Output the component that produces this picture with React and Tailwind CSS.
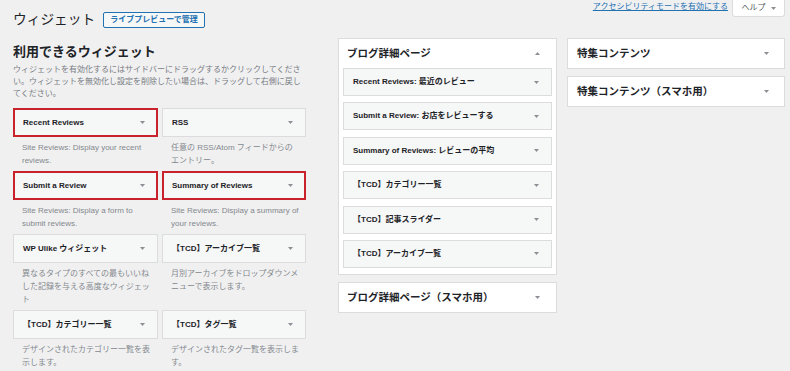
import React from "react";

const font = { fontFamily: '"Liberation Sans", "Noto Sans CJK JP", sans-serif' };

const available = [
  { title: "Recent Reviews", desc: "Site Reviews: Display your recent reviews.", hot: true },
  { title: "RSS", desc: "任意の RSS/Atom フィードからのエントリー。" },
  { title: "Submit a Review", desc: "Site Reviews: Display a form to submit reviews.", hot: true },
  { title: "Summary of Reviews", desc: "Site Reviews: Display a summary of your reviews.", hot: true },
  { title: "WP Ulike ウィジェット", desc: "異なるタイプのすべての最もいいねした記録を与える高度なウィジェット" },
  { title: "【TCD】アーカイブ一覧", desc: "月別アーカイブをドロップダウンメニューで表示します。" },
  { title: "【TCD】カテゴリー一覧", desc: "デザインされたカテゴリー一覧を表示します。" },
  { title: "【TCD】タグ一覧", desc: "デザインされたタグ一覧を表示します。" },
];

const sidebarWidgets = [
  "Recent Reviews: 最近のレビュー",
  "Submit a Review: お店をレビューする",
  "Summary of Reviews: レビューの平均",
  "【TCD】カテゴリー一覧",
  "【TCD】記事スライダー",
  "【TCD】アーカイブ一覧",
];

function Caret({ up = false }) {
  return (
    <svg width="5" height="3" viewBox="0 0 5 3" className="shrink-0">
      <path d={up ? "M0 3L2.5 0L5 3Z" : "M0 0L5 0L2.5 3Z"} fill="#8c8f94" />
    </svg>
  );
}

function WidgetCard({ widget }) {
  return (
    <div>
      <div
        className={`h-[29px] flex items-center justify-between pl-[9px] pr-[12px] bg-[#f6f7f7] border text-[8px] font-bold text-[#1d2327] ${
          widget.hot ? "border-[#c8232c] shadow-[inset_0_0_0_1px_#c8232c]" : "border-[#dcdcde]"
        }`}
      >
        <span>{widget.title}</span>
        <Caret />
      </div>
      <p className="pl-[9px] pr-[6px] pt-[4px] pb-[4px] text-[8px] leading-[13px] text-[#84888d]">
        {widget.desc}
      </p>
    </div>
  );
}

function SidebarBox({ title, open = false, children }) {
  return (
    <div className="bg-white border border-[#dcdcde]">
      <div className="h-[29px] flex items-center justify-between pl-[8px] pr-[16px]">
        <h2 className="text-[10.5px] font-semibold text-[#1d2327]">{title}</h2>
        <Caret up={open} />
      </div>
      {open && <div className="px-[4px] pb-[6px] flex flex-col gap-[6.4px]">{children}</div>}
    </div>
  );
}

export default function App() {
  return (
    <div className="w-[790px] h-[371px] overflow-hidden bg-[#f0f0f1] flex pl-[13px] pr-[5px]" style={font}>
      {/* available widgets */}
      <div className="w-[293px] shrink-0">
        <div className="mt-[12px] flex items-center gap-[8px]">
          <h1 className="text-[13.7px] leading-[16px] text-[#1d2327]">ウィジェット</h1>
          <button className="h-[16px] px-[6px] border border-[#2271b1] bg-[#f6f7f7] rounded-[2px] text-[8px] font-semibold text-[#2271b1] leading-none">
            ライブプレビューで管理
          </button>
        </div>
        <h2 className="mt-[16px] text-[13px] leading-[16px] font-bold text-[#1d2327]">利用できるウィジェット</h2>
        <p className="mt-[4px] text-[8px] leading-[12px] text-[#787c82] whitespace-nowrap">
          ウィジェットを有効化するにはサイドバーにドラッグするかクリックしてくださ
          <br />
          い。ウィジェットを無効化し設定を削除したい場合は、ドラッグして右側に戻し
          <br />
          てください。
        </p>
        <div className="mt-[8px] grid grid-cols-[145px_144px] gap-x-[4px]">
          {available.map((w) => (
            <WidgetCard key={w.title} widget={w} />
          ))}
        </div>
      </div>

      {/* sidebars */}
      <div className="ml-[32px] flex-1">
        <div className="h-[17px] flex justify-end items-start gap-[4px]">
          <a href="#" className="mt-[1px] text-[8px] leading-[12px] text-[#2271b1] underline">
            アクセシビリティモードを有効にする
          </a>
          <button className="h-[17px] w-[53px] flex items-center justify-center gap-[5px] bg-white border border-t-0 border-[#dcdcde] rounded-b-[3px] text-[8px] text-[#50575e]">
            ヘルプ
            <Caret />
          </button>
        </div>
        <div className="mt-[21px] flex gap-[10px]">
          <div className="w-[219px] flex flex-col gap-[7px]">
            <SidebarBox title="ブログ詳細ページ" open>
              {sidebarWidgets.map((t) => (
                <div
                  key={t}
                  className="h-[28px] flex items-center justify-between pl-[9px] pr-[12px] bg-[#f6f7f7] border border-[#dcdcde] text-[8px] font-semibold text-[#1d2327]"
                >
                  <span>{t}</span>
                  <Caret />
                </div>
              ))}
            </SidebarBox>
            <SidebarBox title="ブログ詳細ページ（スマホ用）" />
          </div>
          <div className="flex-1 flex flex-col gap-[7px]">
            <div className="h-[31px] bg-white border border-[#dcdcde] flex items-center justify-between pl-[9px] pr-[15px]">
              <h2 className="text-[10.5px] font-semibold text-[#1d2327]">特集コンテンツ</h2>
              <Caret />
            </div>
            <div className="h-[31px] bg-white border border-[#dcdcde] flex items-center justify-between pl-[9px] pr-[15px]">
              <h2 className="text-[10.5px] font-semibold text-[#1d2327]">特集コンテンツ（スマホ用）</h2>
              <Caret />
            </div>
          </div>
        </div>
      </div>
    </div>
  );
}
